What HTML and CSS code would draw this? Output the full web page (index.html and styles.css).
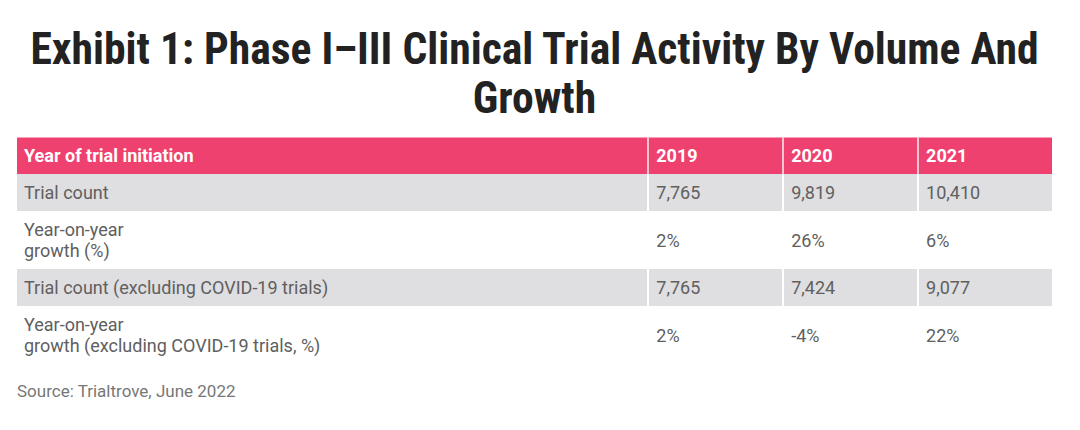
FILE: index.html
```html
<!DOCTYPE html>
<html>
<head>
<meta charset="utf-8">
<link rel="stylesheet" href="styles.css">
</head>
<body>
<div class="page">
  <h1 class="title">Exhibit 1: Phase I–III Clinical Trial Activity By Volume And Growth</h1>
  <table class="data">
    <thead>
      <tr>
        <th class="label">Year of trial initiation</th>
        <th class="num">2019</th>
        <th class="num">2020</th>
        <th class="num">2021</th>
      </tr>
    </thead>
    <tbody>
      <tr class="shade">
        <td>Trial count</td>
        <td>7,765</td>
        <td>9,819</td>
        <td>10,410</td>
      </tr>
      <tr>
        <td>Year-on-year<br>growth (%)</td>
        <td>2%</td>
        <td>26%</td>
        <td>6%</td>
      </tr>
      <tr class="shade">
        <td>Trial count (excluding COVID-19 trials)</td>
        <td>7,765</td>
        <td>7,424</td>
        <td>9,077</td>
      </tr>
      <tr>
        <td>Year-on-year<br>growth (excluding COVID-19 trials, %)</td>
        <td>2%</td>
        <td>-4%</td>
        <td>22%</td>
      </tr>
    </tbody>
  </table>
  <p class="source">Source: Trialtrove, June 2022</p>
</div>
</body>
</html>
```
FILE: styles.css
```css
html, body {
  margin: 0;
  padding: 0;
  background: #ffffff;
}

.page {
  width: 1035px;
  margin-left: 17px;
  padding-top: 25px;
  font-family: Roboto, "Liberation Sans", sans-serif;
}

.title {
  margin: 0 0 14px;
  text-align: center;
  font-family: "Roboto Condensed", Roboto, sans-serif;
  font-stretch: condensed;
  font-weight: 700;
  font-size: 43.6px;
  line-height: 49px;
  color: #222222;
}

.data {
  width: 100%;
  border-collapse: collapse;
  font-size: 18px;
  line-height: 21px;
}

.data th,
.data td {
  text-align: left;
  vertical-align: middle;
  padding: 8px 8px 8px 7px;
  border-left: 2px solid #ffffff;
}

.data th {
  border-left-color: #f7c4d2;
}

.data th:first-child,
.data td:first-child {
  border-left: none;
}

.data thead tr {
  background: #ef4170;
  border-top: 1px solid #f7a0b8;
}

.data th {
  color: #ffffff;
  font-weight: 700;
  padding-top: 7px;
}

.data th.label {
  width: 616px;
}

.data th.num {
  width: 118px;
}

.data td {
  color: #606060;
}

.data tr.shade {
  background: #dfdee1;
}

.data tbody tr:last-child td {
  padding-bottom: 11px;
}

.source {
  margin: 14px 0 0;
  font-size: 17px;
  line-height: 20px;
  color: #777777;
}
```
